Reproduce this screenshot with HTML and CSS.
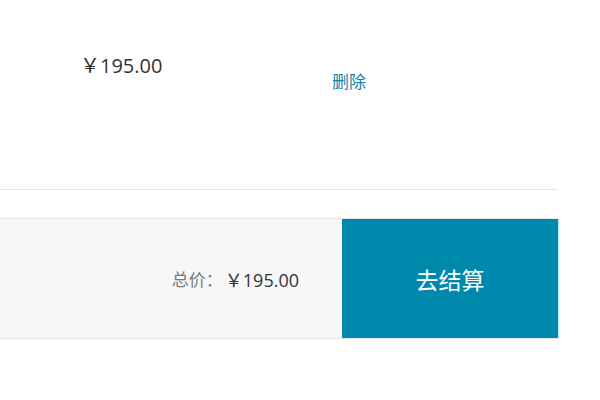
FILE: index.html
```html
<!DOCTYPE html>
<html lang="zh-CN">
<head>
<meta charset="utf-8">
<link rel="stylesheet" href="styles.css">
</head>
<body>
<div class="cart">
  <div class="item">
    <div class="price"><span class="yen">￥</span>195.00</div>
    <div class="ops"><a class="del">删除</a></div>
  </div>
  <div class="footer">
    <div class="total"><span class="label">总价：</span><span class="sum"><span class="yen">￥</span>195.00</span></div>
    <button class="checkout">去结算</button>
  </div>
</div>
</body>
</html>
```

FILE: styles.css
```css
html, body {
  margin: 0;
  padding: 0;
  background: #fff;
}
body {
  font-family: "Open Sans", "Noto Sans CJK SC", sans-serif;
  color: #333;
}
.cart {
  width: 559px;
}
.item {
  width: 558px;
  height: 189px;
  border-bottom: 1px solid #e6e6e6;
  display: flex;
  align-items: flex-start;
}
.yen {
  font-family: "Noto Sans CJK SC", sans-serif;
}
.price {
  margin-left: 80px;
  margin-top: 51px;
  font-size: 20px;
  line-height: 28px;
  color: #333;
  width: 252px;
}
.ops {
  margin-top: 70px;
}
.del {
  font-size: 17px;
  line-height: 22px;
  color: #1b7fa6;
  font-family: "Noto Sans CJK SC", sans-serif;
}
.footer {
  margin-top: 28px;
  height: 119px;
  border-top: 1px solid #e6e6e6;
  border-bottom: 1px solid #e6e6e6;
  background: #f7f7f7;
  display: flex;
  align-items: stretch;
  justify-content: flex-end;
}
.total {
  display: flex;
  align-items: center;
  margin-right: 43px;
}
.label {
  color: #7a7a7a;
  font-family: "Noto Sans CJK SC", sans-serif;
  font-size: 17px;
  margin-right: 2px;
}
.sum {
  color: #333;
  font-size: 18px;
}
.checkout {
  width: 217px;
  border: 0;
  border-right: 1px solid #bfe3ee;
  margin: 0;
  padding: 0;
  background: #0088ad;
  color: #fff;
  font-family: "Noto Sans CJK SC", sans-serif;
  font-size: 23px;
}
```
